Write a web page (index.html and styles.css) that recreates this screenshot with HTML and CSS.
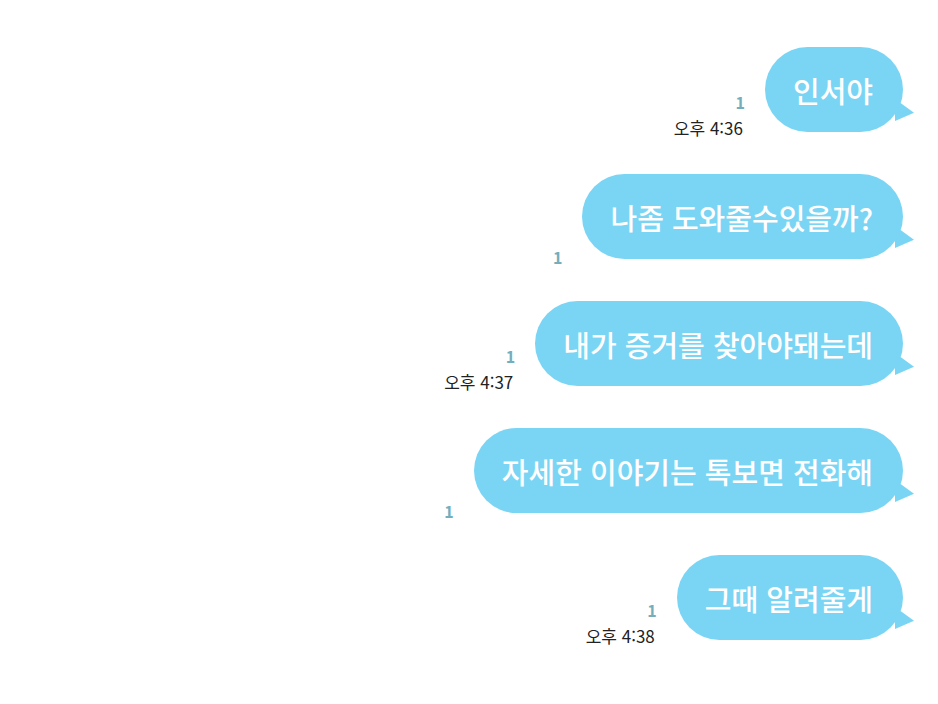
FILE: index.html
```html
<!DOCTYPE html>
<html lang="ko">
<head>
  <meta charset="UTF-8">
  <meta name="viewport" content="width=device-width, initial-scale=1.0">
  <title>대화</title>
  <link rel="stylesheet" href="styles.css">
</head>
<body>
  <div class="chat">
    <div class="row">
      <div class="meta">
        <span class="unread">1</span>
        <span class="time">오후 4:36</span>
      </div>
      <div class="bubble">인서야</div>
    </div>
    <div class="row">
      <div class="meta">
        <span class="unread">1</span>
      </div>
      <div class="bubble">나좀 도와줄수있을까?</div>
    </div>
    <div class="row">
      <div class="meta">
        <span class="unread">1</span>
        <span class="time">오후 4:37</span>
      </div>
      <div class="bubble">내가 증거를 찾아야돼는데</div>
    </div>
    <div class="row">
      <div class="meta">
        <span class="unread">1</span>
      </div>
      <div class="bubble">자세한 이야기는 톡보면 전화해</div>
    </div>
    <div class="row">
      <div class="meta">
        <span class="unread">1</span>
        <span class="time">오후 4:38</span>
      </div>
      <div class="bubble">그때 알려줄게</div>
    </div>
  </div>
</body>
</html>
```

FILE: styles.css
```css
body, html {
  margin: 0;
  padding: 0;
  background: #fff;
  font-family: "Noto Sans CJK KR", "Noto Sans", sans-serif;
}
.chat {
  display: flex;
  flex-direction: column;
  align-items: flex-end;
  gap: 42px;
  padding: 47px 35px 60px 0;
}
.row {
  display: flex;
  align-items: flex-end;
  gap: 20px;
}
.meta {
  display: flex;
  flex-direction: column;
  align-items: flex-end;
  margin-bottom: -7px;
}
.unread {
  color: #74aebd;
  font-size: 16px;
  font-weight: 700;
  line-height: 18px;
}
.time {
  color: #222;
  font-size: 17px;
  line-height: 22px;
  margin-top: 6px;
  margin-right: 2px;
}
.bubble {
  position: relative;
  height: 85px;
  box-sizing: border-box;
  padding: 0 30px 0 28px;
  display: flex;
  align-items: center;
  background: #7ad5f5;
  color: #fff;
  border-radius: 43px;
  font-size: 29px;
  font-weight: 500;
  white-space: nowrap;
}
/* tail */
.bubble::after {
  content: "";
  position: absolute;
  right: -11px;
  bottom: 11px;
  width: 19px;
  height: 22px;
  background: #7ad5f5;
  clip-path: polygon(0 0, 100% 62%, 0 100%);
}
```
